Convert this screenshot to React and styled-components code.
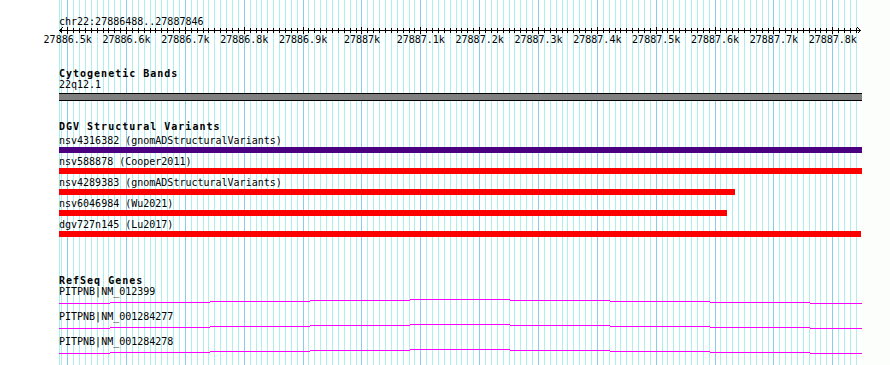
import React from "react";
import styled, { createGlobalStyle } from "styled-components";

const GlobalStyle = createGlobalStyle`
  html, body {
    margin: 0;
    padding: 0;
    background: #fcfefc;
  }
  body {
    font-family: "DejaVu Sans Mono", "Liberation Mono", monospace;
    font-size: 10px;
    color: #000;
  }
`;

// view: chr22:27886488..27887846
const TRACK_W = 803;
const PX_PER_BP = 0.5885;
const bpX = (bp) => 8.7 + (bp - 27886500) * PX_PER_BP;

const gridLines = [];
for (let bp = 27886490; bp <= 27887840; bp += 10) {
  gridLines.push({ x: Math.floor(bpX(bp)) + 0.5, major: bp % 100 === 0 });
}
const majorTicks = gridLines.filter((g) => g.major);

const tickLabels = [];
for (let bp = 27886500; bp <= 27887800; bp += 100) {
  const k = bp / 1000;
  tickLabels.push({ x: bpX(bp), text: `${k % 1 === 0 ? k : k.toFixed(1)}k` });
}

const variants = [
  { name: "nsv4316382 (gnomADStructuralVariants)", color: "#4b0082", width: 803 },
  { name: "nsv588878 (Cooper2011)", color: "#ff0000", width: 803 },
  { name: "nsv4289383 (gnomADStructuralVariants)", color: "#ff0000", width: 676 },
  { name: "nsv6046984 (Wu2021)", color: "#ff0000", width: 668 },
  { name: "dgv727n145 (Lu2017)", color: "#ff0000", width: 802 },
];

const genes = ["PITPNB|NM_012399", "PITPNB|NM_001284277", "PITPNB|NM_001284278"];

// stepped intron line, drawn as flat pieces
const steps = [
  [0, 51, 5.5],
  [51, 151, 4.5],
  [151, 251, 3.5],
  [251, 351, 2.5],
  [351, 451, 1.5],
  [451, 551, 2.5],
  [551, 651, 3.5],
  [651, 751, 4.5],
  [751, 803, 5.5],
];
const genePath = steps.map(([a, b, y]) => `M${a} ${y}H${b}`).join("");

const Page = styled.div`
  width: 890px;
  height: 365px;
  display: flex;
  overflow: hidden;
  background: #fcfefc;
`;

const Gutter = styled.div`
  flex: none;
  width: 59px;
  background: #fff;
`;

const TrackArea = styled.div`
  flex: none;
  position: relative;
  width: ${TRACK_W}px;
  background: #fff;
`;

const Grid = styled.svg`
  position: absolute;
  top: 0;
  left: 0;
`;

const Content = styled.div`
  position: relative;
  z-index: 1;
`;

const Header = styled.header`
  padding-top: 16px;
`;

const Text = styled.div`
  height: ${(p) => p.$h || 12}px;
  line-height: 12px;
  white-space: nowrap;
`;

const TrackTitle = styled(Text)`
  font-weight: bold;
  letter-spacing: 1px;
`;

const Ruler = styled.svg`
  display: block;
`;

const TickRow = styled.div`
  position: relative;
  height: 12px;
  line-height: 12px;
`;

const TickLabel = styled.span`
  position: absolute;
  top: 0;
  transform: translateX(-50%);
  white-space: nowrap;
`;

const Track = styled.section`
  margin-top: ${(p) => p.$top}px;
`;

const Band = styled.div`
  margin-top: 2px;
  height: 6px;
  background: #808080;
  border-top: 1px solid #000;
  border-bottom: 1px solid #000;
`;

const VariantRow = styled.div`
  height: 21px;
`;

const Bar = styled.div`
  height: 6px;
  background: ${(p) => p.$color};
`;

const GeneLine = styled.svg`
  display: block;
`;

export default function App() {
  return (
    <>
      <GlobalStyle />
      <Page>
        <Gutter />
        <TrackArea>
          <Grid width={TRACK_W} height={365} shapeRendering="crispEdges">
            <line x1="0.5" y1="0" x2="0.5" y2="365" stroke="#aeeeee" />
            {gridLines.map((g, i) => (
              <line
                key={i}
                x1={g.x}
                y1="0"
                x2={g.x}
                y2="365"
                stroke={g.major ? "#88ccee" : "#aeeeee"}
              />
            ))}
          </Grid>
          <Content>
            <Header>
              <Text $h={11}>chr22:27886488..27887846</Text>
              <Ruler width={TRACK_W} height={7} shapeRendering="crispEdges">
                <line x1="0" y1="3.5" x2="802" y2="3.5" stroke="#000" />
                {gridLines.map((g, i) => (
                  <line
                    key={i}
                    x1={g.x}
                    y1={g.major ? 0 : 1}
                    x2={g.x}
                    y2={g.major ? 7 : 6}
                    stroke="#000"
                  />
                ))}
                <polyline points="3.5,0.5 0.5,3.5 3.5,6.5" fill="none" stroke="#000" />
                <polyline points="798.5,0.5 801.5,3.5 798.5,6.5" fill="none" stroke="#000" />
              </Ruler>
              <TickRow>
                {tickLabels.map((t) => (
                  <TickLabel key={t.text} style={{ left: t.x }}>
                    {t.text}
                  </TickLabel>
                ))}
              </TickRow>
            </Header>

            <Track $top={22}>
              <TrackTitle $h={11}>Cytogenetic Bands</TrackTitle>
              <Text>22q12.1</Text>
              <Band />
            </Track>

            <Track $top={20}>
              <TrackTitle $h={14}>DGV Structural Variants</TrackTitle>
              {variants.map((v) => (
                <VariantRow key={v.name}>
                  <Text>{v.name}</Text>
                  <Bar $color={v.color} style={{ width: v.width }} />
                </VariantRow>
              ))}
            </Track>

            <Track $top={35}>
              <TrackTitle $h={11}>RefSeq Genes</TrackTitle>
              {genes.map((g) => (
                <div key={g}>
                  <Text>{g}</Text>
                  <GeneLine width={TRACK_W} height={13} shapeRendering="crispEdges">
                    <path d={genePath} stroke="#ff00ff" fill="none" />
                  </GeneLine>
                </div>
              ))}
            </Track>
          </Content>
        </TrackArea>
      </Page>
    </>
  );
}
